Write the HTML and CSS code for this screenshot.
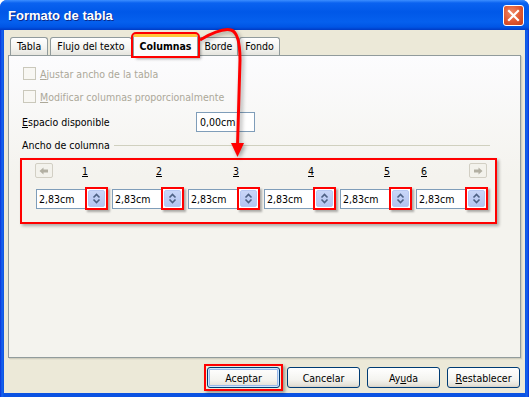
FILE: index.html
```html
<!DOCTYPE html>
<html lang="es">
<head>
<meta charset="utf-8">
<title>Formato de tabla</title>
<link rel="stylesheet" href="styles.css">
</head>
<body>
<div class="window">
  <div class="titlebar">
    <span class="title">Formato de tabla</span>
    <span class="close"><svg width="13" height="13" viewBox="0 0 13 13"><path d="M2 2 L11 11 M11 2 L2 11" stroke="#fff" stroke-width="2.2" stroke-linecap="square"/></svg></span>
  </div>
  <div class="client">
    <div class="tabs">
      <div class="tab">Tabla</div>
      <div class="tab">Flujo del texto</div>
      <div class="tab active">Columnas</div>
      <div class="tab">Borde</div>
      <div class="tab">Fondo</div>
    </div>
    <div class="panel">
      <div class="check"><span class="box"></span><span><u>A</u>justar ancho de la tabla</span></div>
      <div class="check"><span class="box"></span><span><u>M</u>odificar columnas proporcionalmente</span></div>
      <div class="space"><span class="space-label"><u>E</u>spacio disponible</span><span class="input">0,00cm</span></div>
      <div class="group"><span>Ancho de columna</span><span class="line"></span></div>
      <div class="colbox">
        <div class="colhead">
          <span class="nav"><svg width="10" height="8" viewBox="0 0 10 8"><path d="M0.5 4 L4.5 0.5 V2.5 H9 V5.5 H4.5 V7.5 Z" fill="#B3B0A3"/></svg></span>
          <span class="num n1"><u>1</u></span>
          <span class="num n2"><u>2</u></span>
          <span class="num n3"><u>3</u></span>
          <span class="num n4"><u>4</u></span>
          <span class="num n5"><u>5</u></span>
          <span class="num n6"><u>6</u></span>
          <span class="nav navr"><svg width="10" height="8" viewBox="0 0 10 8"><path d="M9.5 4 L5.5 0.5 V2.5 H1 V5.5 H5.5 V7.5 Z" fill="#B3B0A3"/></svg></span>
        </div>
        <div class="fields">
          <div class="field"><span class="text">2,83cm</span><span class="spinwrap"><span class="spin"><svg width="15" height="15" viewBox="0 0 15 15"><path d="M4.5 6.5 L7.5 3.5 L10.5 6.5 M4.5 8.5 L7.5 11.5 L10.5 8.5" fill="none" stroke="#4D6185" stroke-width="1.6"/></svg></span></span></div>
          <div class="field"><span class="text">2,83cm</span><span class="spinwrap"><span class="spin"><svg width="15" height="15" viewBox="0 0 15 15"><path d="M4.5 6.5 L7.5 3.5 L10.5 6.5 M4.5 8.5 L7.5 11.5 L10.5 8.5" fill="none" stroke="#4D6185" stroke-width="1.6"/></svg></span></span></div>
          <div class="field"><span class="text">2,83cm</span><span class="spinwrap"><span class="spin"><svg width="15" height="15" viewBox="0 0 15 15"><path d="M4.5 6.5 L7.5 3.5 L10.5 6.5 M4.5 8.5 L7.5 11.5 L10.5 8.5" fill="none" stroke="#4D6185" stroke-width="1.6"/></svg></span></span></div>
          <div class="field"><span class="text">2,83cm</span><span class="spinwrap"><span class="spin"><svg width="15" height="15" viewBox="0 0 15 15"><path d="M4.5 6.5 L7.5 3.5 L10.5 6.5 M4.5 8.5 L7.5 11.5 L10.5 8.5" fill="none" stroke="#4D6185" stroke-width="1.6"/></svg></span></span></div>
          <div class="field"><span class="text">2,83cm</span><span class="spinwrap"><span class="spin"><svg width="15" height="15" viewBox="0 0 15 15"><path d="M4.5 6.5 L7.5 3.5 L10.5 6.5 M4.5 8.5 L7.5 11.5 L10.5 8.5" fill="none" stroke="#4D6185" stroke-width="1.6"/></svg></span></span></div>
          <div class="field"><span class="text">2,83cm</span><span class="spinwrap"><span class="spin"><svg width="15" height="15" viewBox="0 0 15 15"><path d="M4.5 6.5 L7.5 3.5 L10.5 6.5 M4.5 8.5 L7.5 11.5 L10.5 8.5" fill="none" stroke="#4D6185" stroke-width="1.6"/></svg></span></span></div>
        </div>
      </div>
    </div>
    <div class="buttons">
      <span class="redwrap"><span class="btn default">Aceptar</span></span>
      <span class="btn">Cancelar</span>
      <span class="btn">Ay<u>u</u>da</span>
      <span class="btn"><u>R</u>establecer</span>
    </div>
  </div>
  <svg class="arrow" width="529" height="397" viewBox="0 0 529 397">
    <path d="M200 40 C212 33 223 28 231 30 C238 32 240 44 240 60 L237.5 146" fill="none" stroke="#FF0000" stroke-width="3"/>
    <path d="M231 143 L244 143 L237.5 157 Z" fill="#FF0000"/>
  </svg>
</div>
</body>
</html>
```
FILE: styles.css
```css
* { box-sizing: border-box; }
html, body { margin: 0; padding: 0; background: #ffffff; }
body {
  width: 529px;
  height: 397px;
  overflow: hidden;
  font-family: "DejaVu Sans Condensed", "DejaVu Sans", sans-serif;
  font-size: 10.5px;
  color: #000;
}
.window {
  position: relative;
  width: 529px;
  height: 397px;
  background: linear-gradient(to right, #0831D9 0, #1664EE 2px, #0B52E2 4px, #0B52E2 525px, #1664EE 527px, #0831D9 529px);
  border-radius: 7px 7px 0 0;
  display: flex;
  flex-direction: column;
}
.titlebar {
  height: 30px;
  flex: none;
  border-radius: 7px 7px 0 0;
  background: linear-gradient(to bottom, #3C8EFF 0, #0A62F0 3px, #0058E8 12px, #0560EE 22px, #0055E5 27px, #003BC4 30px);
  display: flex;
  align-items: center;
  justify-content: space-between;
  padding: 0 5px 0 8px;
}
.title {
  color: #fff;
  font-family: "Liberation Sans", Arial, sans-serif;
  font-weight: bold;
  font-size: 13px;
  text-shadow: 1px 1px 0 #0A2A8A;
  margin-top: 1px;
}
.close {
  width: 21px;
  height: 21px;
  border: 1px solid #fff;
  border-radius: 3px;
  background: radial-gradient(circle at 40% 35%, #F08A68 0, #E0562F 55%, #C23E1B 100%);
  display: flex;
  align-items: center;
  justify-content: center;
}
.client {
  flex: 1;
  margin: 0 4px 4px;
  background: #ECE9D8;
  display: flex;
  flex-direction: column;
}
.tabs {
  height: 25px;
  flex: none;
  display: flex;
  align-items: flex-end;
  padding-left: 6px;
}
.tab {
  height: 18px;
  line-height: 16px;
  padding: 0 6px;
  margin-right: 2px;
  border: 1px solid #919B9C;
  border-bottom: none;
  border-radius: 3px 3px 0 0;
  background: linear-gradient(to bottom, #FFFFFF, #F3F3EF 60%, #E6E5DE);
  white-space: nowrap;
}
.tab:nth-child(4), .tab:nth-child(5) { padding: 0 5px; }
.tab:nth-child(4) { margin-right: 1px; }
.tab.active {
  position: relative;
  z-index: 2;
  height: 22px;
  margin-bottom: -1px;
  margin-left: -1px;
  margin-right: 0;
  padding-top: 2px;
  border-top: 3px solid #FFC83C;
  background: #FCFCFE;
  font-weight: bold;
  line-height: 15px;
  outline: 2px solid #FF0000;
  box-shadow: 3px 3px 3px rgba(0,0,0,0.35);
}
.panel {
  flex: none;
  height: 303px;
  margin: 0 4px;
  border: 1px solid #919B9C;
  background: linear-gradient(to bottom, #FCFCFE, #F4F3EE 40%, #F4F3EE);
  box-shadow: 1px 1px 0 #D0CEBF, 2px 2px 0 #E3E0D0;
  padding: 6px 0 0 13px;
  position: relative;
  z-index: 1;
}
.check {
  height: 23px;
  display: flex;
  align-items: center;
  color: #ACA899;
}
.box {
  width: 13px;
  height: 13px;
  border: 1px solid #CAC8BB;
  background: #F8F7F3;
  margin-left: 1px;
  margin-right: 4px;
}
.space {
  margin-top: 4px;
  height: 20px;
  display: flex;
  align-items: center;
}
.space-label { width: 174px; }
.input {
  width: 59px;
  height: 20px;
  border: 1px solid #7F9DB9;
  background: #fff;
  padding-left: 3px;
  line-height: 18px;
}
.group {
  margin-top: 6px;
  height: 14px;
  display: flex;
  align-items: center;
}
.line {
  flex: 1;
  height: 1px;
  background: #D0D0BF;
  margin: 0 30px 0 4px;
}
.colbox {
  margin-top: 6px;
  margin-left: -2px;
  width: 477px;
  border: 2px solid #FF0000;
  box-shadow: 2px 2px 3px rgba(0,0,0,0.3);
  padding: 3px 0 12px 13px;
}
.colhead {
  height: 15px;
  display: flex;
  align-items: center;
}
.nav {
  width: 18px;
  height: 15px;
  border: 1px solid #D2CFC4;
  border-radius: 2px;
  background: #F3F2EC;
  display: flex;
  align-items: center;
  justify-content: center;
}
.num { width: 7px; }
.n1 { margin-left: 29px; }
.n2 { margin-left: 67px; }
.n3 { margin-left: 70px; }
.n4 { margin-left: 68px; }
.n5 { margin-left: 69px; }
.n6 { margin-left: 30px; }
.navr { margin-left: 41px; }
.fields {
  margin-top: 9px;
  display: flex;
  align-items: center;
  gap: 4px;
  padding-left: 1px;
}
.field {
  display: flex;
  align-items: center;
}
.text {
  width: 50px;
  height: 20px;
  border: 1px solid #7F9DB9;
  background: #fff;
  padding-left: 2px;
  line-height: 18px;
}
.spinwrap {
  width: 23px;
  height: 23px;
  margin-left: -1px;
  border: 2px solid #FF0000;
  padding: 1px;
  box-shadow: 2px 2px 2px rgba(0,0,0,0.3);
  background: #fff;
}
.spin {
  display: flex;
  width: 17px;
  height: 17px;
  border: 1px solid #B7C8F2;
  border-radius: 2px;
  background: linear-gradient(to bottom, #C9D6F8, #B3C4F0);
  align-items: center;
  justify-content: center;
}
.buttons {
  margin-top: 9px;
  display: flex;
  justify-content: flex-end;
  gap: 7px;
  padding-right: 5px;
}
.btn {
  width: 73px;
  height: 21px;
  border: 1px solid #003C74;
  border-radius: 3px;
  background: linear-gradient(to bottom, #FFFFFF, #F4F4F0 60%, #E5E2D8 90%, #D6D0C5);
  display: flex;
  align-items: center;
  justify-content: center;
}
.btn.default {
  box-shadow: inset 0 0 0 1px #CEE7FF, inset 0 0 0 2px #98B8EA;
}
.redwrap {
  display: flex;
  margin: -3px;
  border: 2px solid #FF0000;
  padding: 1px;
  box-shadow: 2px 2px 3px rgba(0,0,0,0.35);
}
.arrow {
  position: absolute;
  left: 0;
  top: 0;
  pointer-events: none;
  z-index: 5;
  filter: drop-shadow(2px 2px 2px rgba(0,0,0,0.35));
}
```
